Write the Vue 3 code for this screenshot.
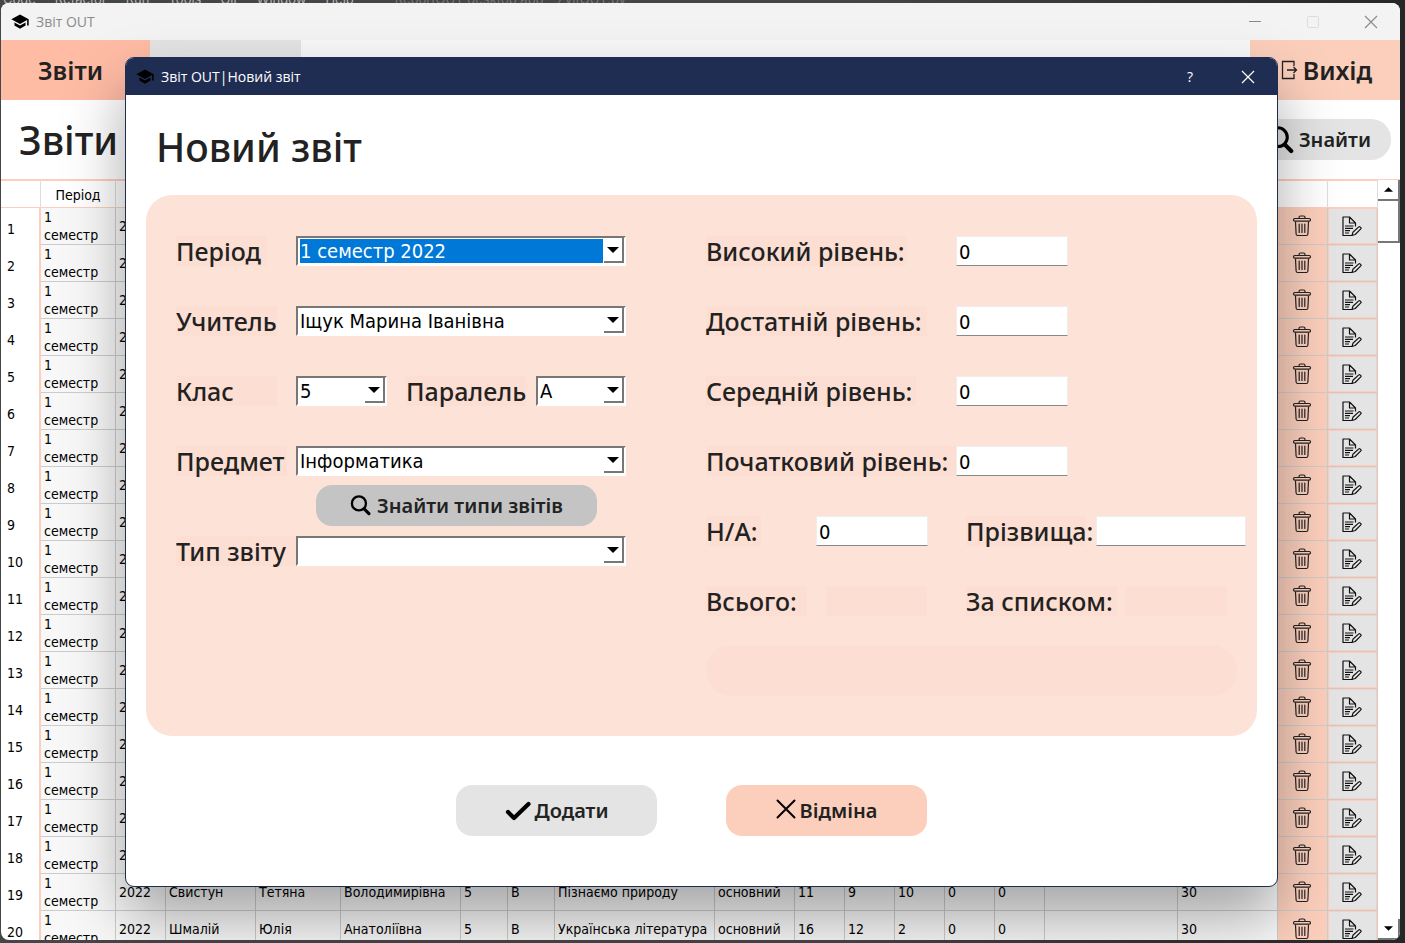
<script setup>
import { ref } from 'vue'

const menu = ['Code', 'Refactor', 'Run', 'Tools', 'Git', 'Window', 'Help']
const widths = [40, 75, 50, 90, 85, 120, 47, 47, 160, 80, 50, 50, 50, 50, 50, 0, 100, 50, 50]
const details = {
  19: ['Свистун', 'Тетяна', 'Володимирівна', '5', 'В', 'Пізнаємо природу', 'основний', '11', '9', '10', '0', '0', '', '30'],
  20: ['Шмалій', 'Юлія', 'Анатоліївна', '5', 'В', 'Українська література', 'основний', '16', '12', '2', '0', '0', '', '30'],
}
const blank = Array(14).fill('')
const rows = Array.from({ length: 20 }, (_, i) => ({ n: i + 1, cells: details[i + 1] || blank }))

const levels = ref([
  { id: 'high', label: 'Високий рівень:', value: '0', size: 'w200' },
  { id: 'enough', label: 'Достатній рівень:', value: '0', size: 'w220' },
  { id: 'middle', label: 'Середній рівень:', value: '0', size: 'w210' },
  { id: 'basic', label: 'Початковий рівень:', value: '0', size: 'w250' },
])
const absent = ref('0')
const surnames = ref('')
</script>

<template>
  <div class="desktop">
    <div class="ide">
      <span v-for="m in menu" :key="m">{{ m }}</span>
      <span class="project">ReportOUT desktop app - ZvitOUT.py</span>
    </div>

    <svg class="defs" aria-hidden="true">
      <symbol id="cap" viewBox="0 0 24 24">
        <path d="M5 13.2v4L12 21l7-3.800v-4L12 17zM12 3 1 9l11 6 9-4.900V17h2V9z" />
      </symbol>
      <symbol id="trash" viewBox="0 0 20 22">
        <g fill="none" stroke="#222" stroke-width="1.200" stroke-linecap="round" stroke-linejoin="round">
          <rect x="1.500" y="3.500" width="17" height="2.600" rx="1.300" />
          <path d="M7 3.300V2.500Q7 1 8.500 1h3Q13 1 13 2.500v.8M3.500 7l.6 12Q4.300 20.500 5.600 20.500h8.800Q15.700 20.500 15.900 19l.6-12M7.200 9v8.500M10 9v8.500M12.800 9v8.500" />
        </g>
      </symbol>
      <symbol id="edit" viewBox="0 0 20 21">
        <g fill="none" stroke="#111" stroke-width="1.200" stroke-linejoin="round">
          <path d="M10 19.500H1V1h6.500l6 6v3.500M7.500 1v6h6M3 10h8.500M3 12.300h8M3 14.600h5M3 17h4" />
          <path d="m10 19.500.9-3.200 5.900-5.400q.6-.6 1.200 0l.8.8q.6.6 0 1.200l-5.600 5.600z" />
        </g>
      </symbol>
      <symbol id="search" viewBox="0 0 20 20">
        <circle cx="8.500" cy="8" r="6.700" fill="none" stroke="#000" stroke-width="2.200" />
        <path d="m13.500 13.300 4.500 4.500" stroke="#000" stroke-width="3" stroke-linecap="round" />
      </symbol>
      <symbol id="down" viewBox="0 0 12 6"><path d="M0 0h12L6 6z" /></symbol>
      <symbol id="cross" viewBox="0 0 14 14">
        <path d="m1 1 12 12M13 1 1 13" fill="none" stroke="currentColor" stroke-width="1.200" />
      </symbol>
    </svg>

    <main class="window">
      <header class="titlebar">
        <svg class="cap"><use href="#cap" /></svg>
        <span class="caption">Звіт OUT</span>
        <button class="sys" aria-label="Згорнути"><svg width="12" height="12"><path d="M0 5.500h12" stroke="#888" /></svg></button>
        <button class="sys" aria-label="Розгорнути"><svg width="12" height="12"><rect x=".5" y=".5" width="11" height="11" rx="1" fill="none" stroke="#ddd" /></svg></button>
        <button class="sys" aria-label="Закрити"><svg width="14" height="14"><use href="#cross" /></svg></button>
      </header>

      <nav class="nav">
        <button class="tab active">Звіти</button>
        <button class="tab grey" aria-label="Розділ"></button>
        <button class="tab exit">
          <svg width="17" height="20" viewBox="0 0 17 20" fill="none" stroke="#222" stroke-width="1.300">
            <path d="M13 6V1.500H1.500v17H13V14M6 10h9.500M12.500 7l3 3-3 3" />
          </svg>
          Вихід
        </button>
      </nav>

      <section class="heading">
        <h1>Звіти</h1>
        <button class="find"><svg width="28" height="28"><use href="#search" /></svg>Знайти</button>
      </section>

      <section class="listing">
        <table class="grid">
          <colgroup>
            <col v-for="(w, i) in widths" :key="i" :style="w ? { width: w + 'px' } : {}">
          </colgroup>
          <thead>
            <tr>
              <th></th>
              <th>Період</th>
              <th v-for="i in 17" :key="i"></th>
            </tr>
          </thead>
          <tbody>
            <tr v-for="r in rows" :key="r.n">
              <th scope="row">{{ r.n }}</th>
              <td>1<br>семестр</td>
              <td>2022</td>
              <td v-for="(c, i) in r.cells" :key="i">{{ c }}</td>
              <td class="act del"><button aria-label="Видалити"><svg width="20" height="22"><use href="#trash" /></svg></button></td>
              <td class="act upd"><button aria-label="Редагувати"><svg width="20" height="21"><use href="#edit" /></svg></button></td>
            </tr>
          </tbody>
        </table>
        <div class="scroll">
          <button aria-label="Вгору"><svg class="up" width="9" height="5"><use href="#down" /></svg></button>
          <div class="thumb"></div>
          <button class="last" aria-label="Вниз"><svg width="9" height="5"><use href="#down" /></svg></button>
        </div>
      </section>
    </main>

    <section class="dialog" role="dialog" aria-labelledby="dialog-title">
      <header class="titlebar dark">
        <svg class="cap"><use href="#cap" /></svg>
        <span class="caption">Звіт OUT|Новий звіт</span>
        <button class="sys">?</button>
        <button class="sys" aria-label="Закрити"><svg width="14" height="14"><use href="#cross" /></svg></button>
      </header>
      <h2 id="dialog-title">Новий звіт</h2>

      <form class="panel" @submit.prevent>
        <div class="column">
          <div class="row">
            <div class="slot"><label class="w90" for="period">Період</label></div>
            <div class="combo picked"><select id="period"><option>1 семестр 2022</option></select><i><svg><use href="#down" /></svg></i></div>
          </div>
          <div class="row">
            <div class="slot"><label class="w100" for="teacher">Учитель</label></div>
            <div class="combo"><select id="teacher"><option>Іщук Марина Іванівна</option></select><i><svg><use href="#down" /></svg></i></div>
          </div>
          <div class="row">
            <div class="slot"><label class="w100" for="class">Клас</label></div>
            <div class="combo short"><select id="class"><option>5</option></select><i><svg><use href="#down" /></svg></i></div>
            <div class="slot second"><label class="w120" for="parallel">Паралель</label></div>
            <div class="combo"><select id="parallel"><option>А</option></select><i><svg><use href="#down" /></svg></i></div>
          </div>
          <div class="row">
            <div class="slot"><label class="w110" for="subject">Предмет</label></div>
            <div class="combo"><select id="subject"><option>Інформатика</option></select><i><svg><use href="#down" /></svg></i></div>
          </div>
          <button class="types" type="button"><svg width="21" height="21"><use href="#search" /></svg>Знайти типи звітів</button>
          <div class="row">
            <div class="slot"><label class="w120" for="kind">Тип звіту</label></div>
            <div class="combo"><select id="kind"><option></option></select><i><svg><use href="#down" /></svg></i></div>
          </div>
        </div>

        <div class="column">
          <div v-for="l in levels" :key="l.id" class="row">
            <div class="slot wide"><label :class="l.size" :for="l.id">{{ l.label }}</label></div>
            <input :id="l.id" v-model="l.value" class="w112">
          </div>
          <div class="row">
            <div class="slot mid"><label class="w55" for="absent">Н/А:</label></div>
            <input id="absent" v-model="absent" class="w112">
            <div class="slot third"><label class="w120" for="surnames">Прізвища:</label></div>
            <input id="surnames" v-model="surnames" class="w150">
          </div>
          <div class="row">
            <div class="slot"><label class="w100" for="total">Всього:</label></div>
            <output id="total"></output>
            <div class="slot fourth"><label class="w150" for="listed">За списком:</label></div>
            <output id="listed"></output>
          </div>
          <div class="message"></div>
        </div>
      </form>

      <footer class="actions">
        <button>
          <svg width="26" height="20" viewBox="0 0 26 20"><path d="m3 11 6 6L23.500 3" fill="none" stroke="#000" stroke-width="4.200" stroke-linecap="round" stroke-linejoin="round" /></svg>
          Додати
        </button>
        <button class="cancel">
          <svg class="lift" width="20" height="20" viewBox="0 0 20 20"><path d="m1.500 1.500 17 17M18.500 1.500l-17 17" stroke="#000" stroke-width="2" stroke-linecap="round" /></svg>
          Відміна
        </button>
      </footer>
    </section>
  </div>
</template>

<style>
body { background: #3a3c3d; overflow: hidden; }
</style>

<style scoped>
* { box-sizing: border-box; }
.desktop {
  position: relative;
  height: 100vh;
  padding: 3px 5px 3px 1px;
  background: linear-gradient(90deg, #454647 60%, #252627);
  color: #222;
  font-family: "DejaVu Sans Condensed", "DejaVu Sans", sans-serif;
  font-stretch: condensed;
  overflow: hidden;
}
button { border: 0; padding: 0; font: inherit; color: inherit; background: none; }
.defs { position: absolute; width: 0; height: 0; }
.ide {
  position: absolute;
  top: -8px;
  left: 3px;
  display: flex;
  gap: 19px;
  font: 13px/14px Inter, sans-serif;
  color: #b4b4b4;
  white-space: nowrap;
}
.project { margin-left: 22px; color: #777; }
.window {
  position: relative;
  display: flex;
  flex-direction: column;
  height: 100%;
  border-radius: 8px;
  overflow: hidden;
  background: #fff;
}
.titlebar {
  display: flex;
  align-items: center;
  flex: none;
  height: 37px;
  padding-left: 9px;
  background: #f3f3f3;
  color: #8b8b8b;
  font: 14px/20px "Open Sans", "Noto Sans", sans-serif;
}
.cap { width: 20px; height: 19px; margin-right: 6px; fill: #000; }
.caption { margin-right: auto; }
.sys { display: grid; place-items: center; width: 58px; height: 30px; }
.nav { display: flex; flex: none; height: 60px; background: #f8f8f8; }
.tab { width: 149px; font: 600 25px/34px "Noto Sans", sans-serif; }
.tab.active { background: #ffbca5; padding-right: 10px; }
.tab.grey { width: 151px; background: #e4e4e4; }
.tab.exit {
  display: flex;
  align-items: center;
  justify-content: center;
  gap: 5px;
  width: 150px;
  margin-left: auto;
  padding-left: 3px;
  background: #fccfbc;
}
.heading {
  display: flex;
  align-items: center;
  justify-content: space-between;
  flex: none;
  height: 79px;
  padding: 4px 9px 4px 18px;
}
h1, h2 { margin: 0; font: 500 39px/50px "Noto Sans", sans-serif; }
.find {
  display: flex;
  align-items: center;
  justify-content: flex-end;
  gap: 5px;
  width: 170px;
  height: 41px;
  padding-right: 20px;
  border-radius: 20px;
  background: #e4e4e4;
}
.find, .types, .actions button { font: 600 20px/28px "Noto Sans", sans-serif; }
.listing { display: flex; flex: 1; min-height: 0; align-items: flex-start; border-top: 1px solid #fccfbc; overflow: hidden; }
.grid {
  flex: 1;
  min-width: 0;
  table-layout: fixed;
  border-collapse: separate;
  border-spacing: 0;
  font-size: 14px;
  line-height: 18px;
  color: #000;
}
.grid th { font-weight: 400; padding: 0; }
.grid thead th { height: 28px; padding-top: 2px; border-top: 1px solid #fccfbc; border-right: 1px solid #ddd; border-bottom: 1px solid #fccfbc; }
.grid tbody th { padding: 4px 0 0 6px; text-align: left; border-right: 2px solid #fccfbc; }
.grid td {
  height: 37px;
  padding: 0 0 0 3px;
  border-right: 1px solid #ccc;
  border-bottom: 1px solid #ccc;
  background: #f8f8f8;
  white-space: nowrap;
}
.grid .act { padding: 0; }
.act button { display: grid; place-items: center; width: 100%; height: 36px; }
.del button { background: #fccfbc; padding-right: 2px; }
.upd button { background: #e4e4e4; border: 1px solid #fccfbc; padding-right: 2px; }
.scroll { display: flex; flex-direction: column; flex: none; align-self: stretch; width: 22px; }
.scroll button { display: grid; place-items: center; flex: none; width: 22px; height: 21px; border-right: 2px solid #777; border-bottom: 2px solid #777; }
.thumb { width: 22px; height: 42px; border-right: 2px solid #777; border-bottom: 2px solid #777; }
.scroll .last { margin-top: auto; }
.up { transform: rotate(180deg); }

.dialog {
  position: absolute;
  top: 57px;
  left: 125px;
  right: 127px;
  border: 1px solid #202d52;
  border-radius: 9px;
  background: #fff;
  overflow: hidden;
  box-shadow: 0 30px 60px rgba(0, 0, 0, 0.34);
}
.dark { background: #202d52; color: #fff; }
.dialog h2 { padding: 27px 30px 23px; }
.panel {
  display: flex;
  gap: 80px;
  margin: 0 20px 49px;
  padding: 41px 20px 40px 30px;
  border-radius: 26px;
  background: #fde2d7;
}
.column { display: flex; flex-direction: column; flex: none; width: 450px; }
.column + .column { flex: 1; min-width: 0; }
.row { display: flex; height: 30px; margin-bottom: 40px; }
.slot { flex: none; width: 120px; }
.second { width: 130px; margin-left: 19px; }
.wide { width: 250px; }
.mid { width: 110px; }
.third { width: 130px; margin-left: 38px; }
.fourth { width: 160px; margin-left: 39px; }
label {
  display: block;
  height: 30px;
  background: #fcded3;
  font: 550 25px/31px "Noto Sans", sans-serif;
  white-space: nowrap;
}
.w55 { width: 55px; }
.w90 { width: 91px; }
.w100 { width: 101px; }
.w110 { width: 111px; }
.w120 { width: 120px; }
.w150 { width: 151px; }
.w200 { width: 200px; }
.w210 { width: 210px; }
.w220 { width: 221px; }
.w250 { width: 250px; }
.w112 { width: 112px; }
input.w150 { width: 150px; }
.combo {
  position: relative;
  flex: 1;
  height: 30px;
  background: #fff;
  border: solid #fff;
  border-width: 2px;
  border-top-color: #777;
  border-left-color: #777;
}
.short { flex: none; width: 91px; }
select, input {
  appearance: none;
  font-family: inherit;
  font-stretch: inherit;
  font-size: 20px;
  line-height: 26px;
  color: #000;
  background: #fff;
  border: 0;
  border-radius: 0;
  outline: 0;
}
select { display: block; width: 100%; height: 26px; padding: 0 22px 0 2px; }
.picked select { background: #0078d7; color: #fff; border: solid #fff; border-width: 1px 21px 1px 2px; line-height: 24px; padding: 0; }
.combo i {
  position: absolute;
  top: 0;
  right: 0;
  display: grid;
  place-items: center;
  width: 20px;
  height: 25px;
  border-right: 2px solid #777;
  border-bottom: 2px solid #777;
  background: #fff;
  pointer-events: none;
}
.combo svg { width: 12px; height: 6px; }
input { flex: none; height: 30px; padding: 2px 2px 0; border: 1px solid #eee; border-bottom-color: #888; }
output { width: 101px; background: #fcded3; }
.message { height: 51px; margin-top: -11px; margin-bottom: 0; border-radius: 25px; background: #fcded3; }
.types {
  display: flex;
  align-items: center;
  justify-content: center;
  gap: 6px;
  width: 281px;
  height: 41px;
  margin: -31px 0 10px 140px;
  border-radius: 16px;
  background: #c4c4c4;
}
.actions { display: flex; justify-content: center; gap: 69px; padding: 0 20px 50px 0; }
.actions button {
  display: flex;
  align-items: center;
  justify-content: center;
  gap: 4px;
  width: 201px;
  height: 51px;
  border-radius: 16px;
  background: #e4e4e4;
}
.actions .cancel { background: #fccfbc; }
.lift { margin-bottom: 4px; }
</style>
